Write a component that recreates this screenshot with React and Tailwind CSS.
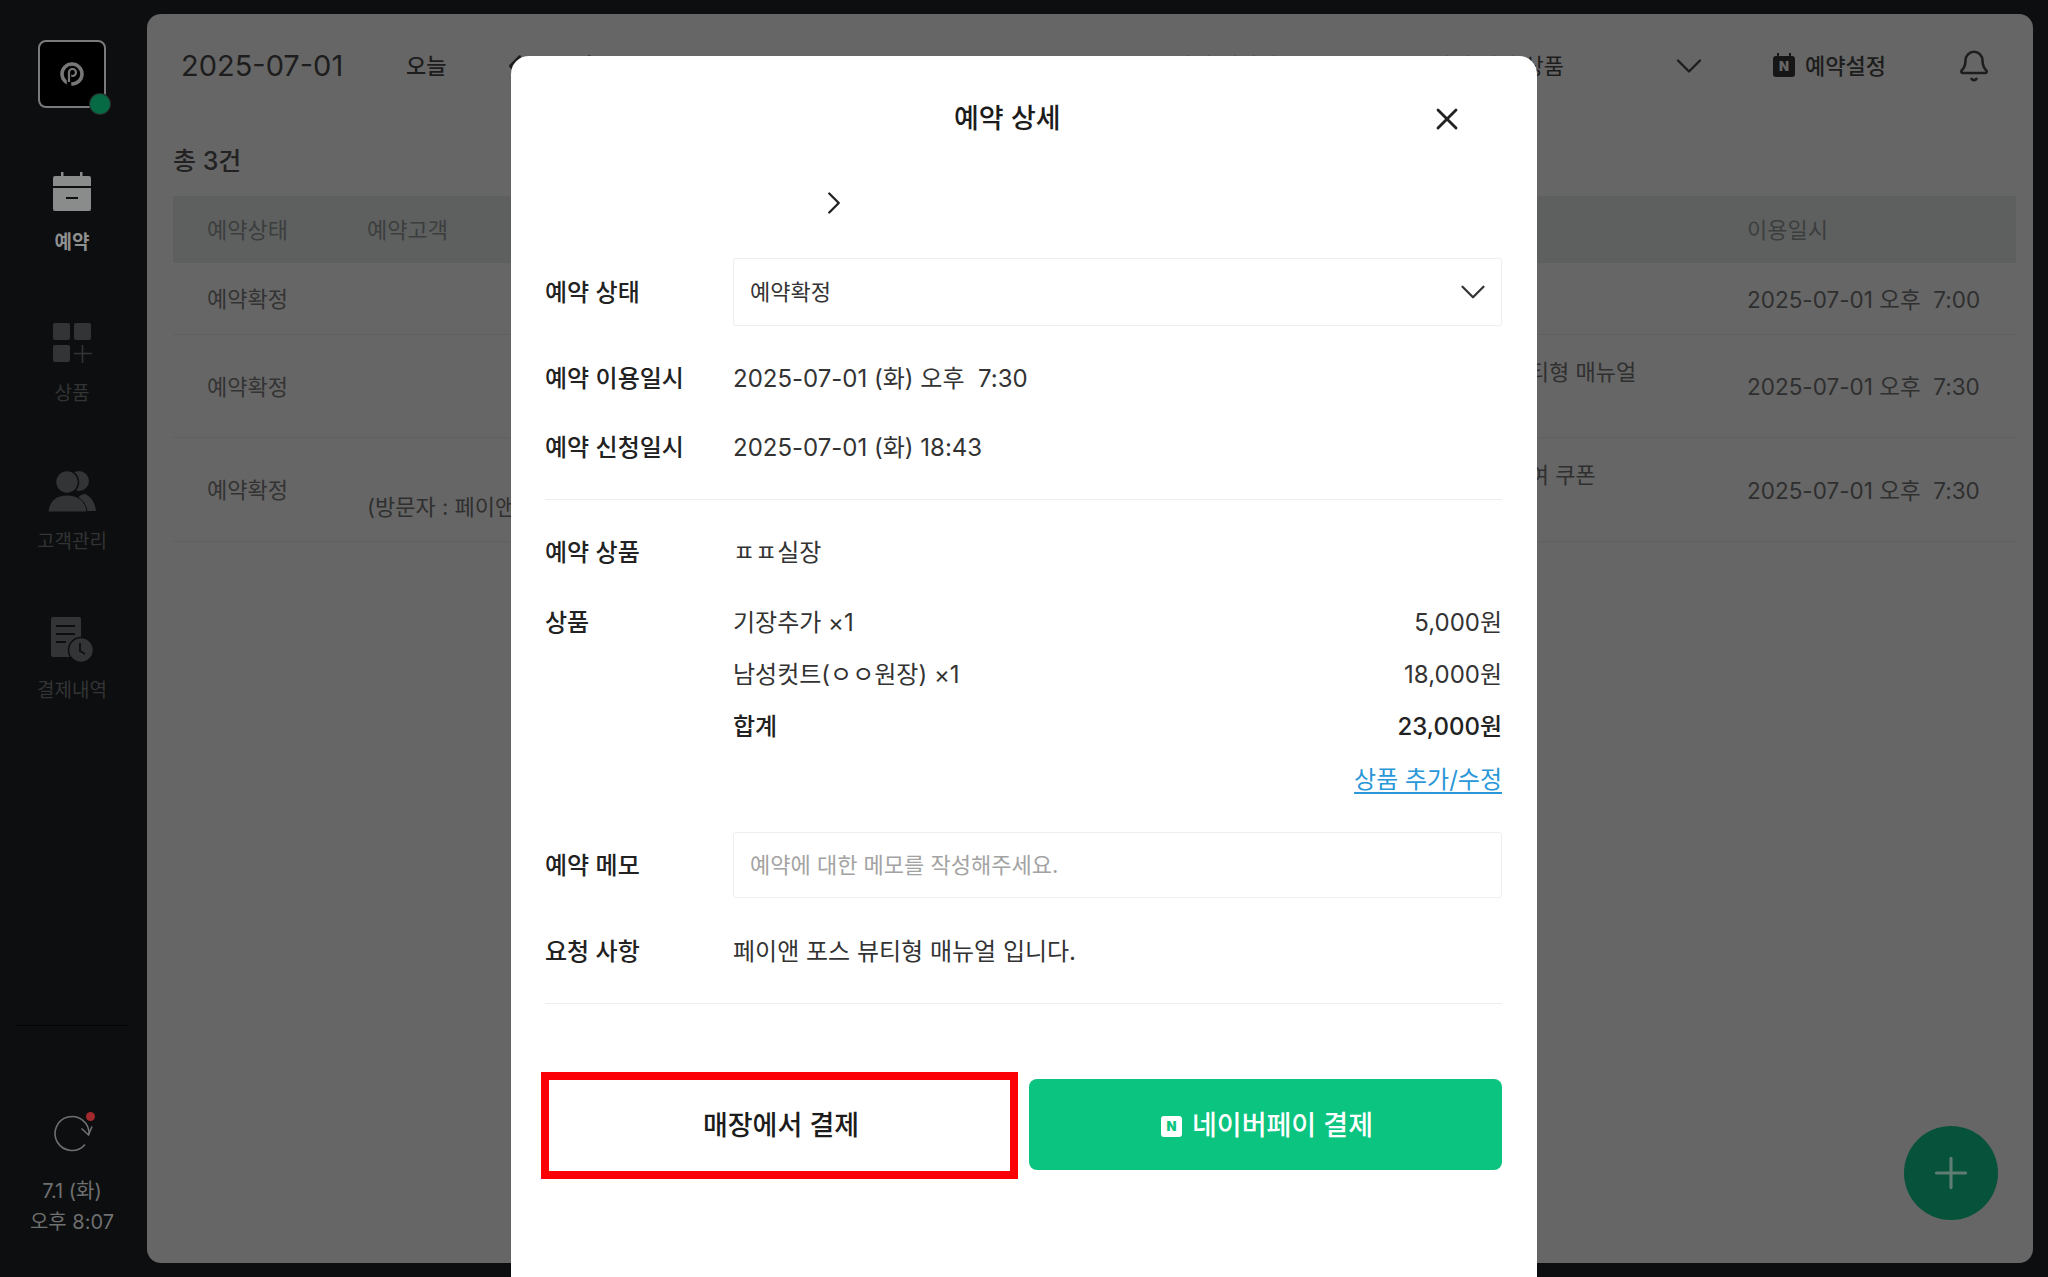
import { Bell, ChevronDown, ChevronLeft, ChevronRight, Plus, X } from 'lucide-react'

const font = { fontFamily: 'Inter, "Noto Sans CJK KR", sans-serif' }

function CalendarIcon() {
  return (
    <svg width="40" height="40" viewBox="0 0 40 40" fill="#8a8b8b">
      <rect x="9" y="0" width="2.5" height="6" />
      <rect x="28" y="0" width="2.5" height="6" />
      <path d="M1 6a2 2 0 0 1 2-2h34a2 2 0 0 1 2 2v8H1z" />
      <path d="M1 16h38v21a2 2 0 0 1-2 2H3a2 2 0 0 1-2-2z" />
      <rect x="14" y="25" width="12" height="2" fill="#0d0e0f" />
    </svg>
  )
}

function ProductIcon() {
  return (
    <svg width="40" height="40" viewBox="0 0 40 40" fill="#333435">
      <rect x="1" y="0" width="17" height="17" rx="2" />
      <rect x="22" y="0" width="17" height="17" rx="2" />
      <rect x="1" y="22" width="17" height="17" rx="2" />
      <path d="M22 30.5h18M30.500 22v18" stroke="#333435" strokeWidth="1.600" />
    </svg>
  )
}

function CustomerIcon() {
  return (
    <svg width="48" height="42" viewBox="0 0 48 42" fill="#333435">
      <circle cx="31" cy="11" r="10" />
      <path d="M26 41c2-10 4-16 10-17 6 1 11 8 12 17z" />
      <circle cx="19" cy="12" r="11.500" stroke="#0d0e0f" strokeWidth="1.500" />
      <path d="M0 42c1-11 8-17 19-17s19 6 20 17z" stroke="#0d0e0f" strokeWidth="1" />
    </svg>
  )
}

function PayHistoryIcon() {
  return (
    <svg width="42" height="46" viewBox="0 0 42 46">
      <path d="M0 2a2 2 0 0 1 2-2h26a2 2 0 0 1 2 2v38H2a2 2 0 0 1-2-2z" fill="#333435" />
      <path d="M5 9h19M5 17h19M5 25h10" stroke="#0d0e0f" strokeWidth="2" />
      <circle cx="30" cy="33" r="12.500" fill="#333435" stroke="#0d0e0f" strokeWidth="1.500" />
      <path d="M29 26v8l5 3" fill="none" stroke="#0d0e0f" strokeWidth="1.800" />
    </svg>
  )
}

function RefreshIcon() {
  return (
    <svg width="38" height="38" viewBox="0 0 38 38" fill="none" stroke="#6f7070" strokeWidth="1.600" className="overflow-visible">
      <path d="M32 29.500A17 17 0 1 1 36 19.500" />
      <path d="M28.500 13.500l7 6.500 3.500-8.500" />
    </svg>
  )
}

function LogoMark() {
  return (
    <svg width="24" height="24" viewBox="0 0 24 24" fill="none" stroke="#777777">
      <circle cx="12" cy="12" r="10" strokeWidth="3.500" />
      <circle cx="12.500" cy="10.500" r="3.500" strokeWidth="2.200" />
      <path d="M9 10v14" stroke="#000000" strokeWidth="4.500" />
      <path d="M9 10v10" strokeWidth="2.200" />
    </svg>
  )
}

function NaverBookingIcon() {
  return (
    <span className="relative flex h-[21px] w-[22px] items-center justify-center rounded-[3px] bg-[#161616] text-[13px] leading-none font-black text-[#666666]">
      <span className="absolute -top-[3px] left-[4px] h-[4px] w-[2px] bg-[#161616]" />
      <span className="absolute -top-[3px] right-[4px] h-[4px] w-[2px] bg-[#161616]" />
      N
    </span>
  )
}

function NavItem({ icon, label, className, textClass }) {
  return (
    <div className={`flex flex-col items-center ${className}`}>
      <div className="flex h-[46px] items-center justify-center">{icon}</div>
      <span className={`mt-[15px] text-[19px] leading-[26px] ${textClass}`}>{label}</span>
    </div>
  )
}

function Sidebar() {
  return (
    <aside className="flex h-full w-[147px] shrink-0 flex-col items-center pr-[3px]">
      <div className="relative mt-[40px] flex h-[68px] w-[68px] items-center justify-center rounded-[8px] border-2 border-[#7a7a7a] bg-black">
        <LogoMark />
        <span className="absolute -right-[6px] -bottom-[8px] h-[20px] w-[20px] rounded-full bg-[#066b45] ring-1 ring-[#2a2a2a]" />
      </div>
      <NavItem icon={<CalendarIcon />} label="예약" className="mt-[61px]" textClass="font-semibold text-[#8f9090]" />
      <NavItem icon={<ProductIcon />} label="상품" className="mt-[64px]" textClass="text-[#333435]" />
      <NavItem icon={<CustomerIcon />} label="고객관리" className="mt-[61px]" textClass="text-[#333435]" />
      <NavItem icon={<PayHistoryIcon />} label="결제내역" className="mt-[62px]" textClass="text-[#333435]" />
      <div className="mt-auto mb-[89px] h-px w-[112px] bg-[#050505]" />
      <div className="relative mb-[23px]">
        <RefreshIcon />
        <span className="absolute -top-[3px] right-[-4px] h-[9px] w-[9px] rounded-full bg-[#a1282d]" />
      </div>
      <div className="mb-[39px] flex flex-col items-center text-[20px] leading-[31px] text-[#6f7070]">
        <span>7.1 (화)</span>
        <span>오후 8:07</span>
      </div>
    </aside>
  )
}

function Row({ h, product, customer, time }) {
  return (
    <div className={`flex items-center border-b border-[#606060] pt-[2px] text-[22px] text-[#2f2f2f] ${h}`}>
      <div className="w-[194px] pl-[34px] text-[#333333]">예약확정</div>
      <div className="w-[1028px]">{customer && <div className="pt-[34px]">{customer}</div>}</div>
      <div className="w-[352px]">{product && <div className="pb-[30px]">{product}</div>}</div>
      <div className="flex-1 text-[22.5px] whitespace-pre">{time}</div>
    </div>
  )
}

function Background() {
  return (
    <main className="my-[14px] mr-[15px] flex-1 rounded-[14px] bg-[#666666] pr-[17px] pl-[26px]">
      <div className="flex h-[104px] items-center">
        <span className="ml-[8px] w-[225px] text-[29px] text-[#1d1d1d]">2025-07-01</span>
        <span className="w-[46px] text-[22px] font-medium text-[#1d1d1d]">오늘</span>
        <ChevronLeft className="ml-[44px] text-[#1d1d1d]" size={38} strokeWidth={1.600} />
        <ChevronRight className="ml-[41px] text-[#1d1d1d]" size={38} strokeWidth={1.600} />
        <span className="ml-[558px] text-[22px] text-[#1d1d1d]">전체 예약자</span>
        <div className="ml-auto flex items-center text-[#1d1d1d]">
          <span className="mr-[103px] text-[22px]">전체 예약 상품</span>
          <ChevronDown className="mr-[62px]" size={44} strokeWidth={1.300} />
          <NaverBookingIcon />
          <span className="mr-[71px] ml-[10px] text-[22px] font-medium">예약설정</span>
          <Bell className="mr-[25px]" size={34} strokeWidth={1.800} />
        </div>
      </div>
      <div className="mt-[27px] mb-[19px] h-[32px] text-[25px] leading-[32px] font-medium text-[#222222]">총 3건</div>
      <div className="flex h-[67px] items-center bg-[#5e6060] pt-[2px] text-[22px] text-[#3c3e3e]">
        <div className="w-[194px] pl-[34px]">예약상태</div>
        <div className="w-[1380px]">예약고객</div>
        <div className="flex-1">이용일시</div>
      </div>
      <Row h="h-[72px]" time="2025-07-01 오후  7:00" />
      <Row h="h-[103px]" product="페이앤 포스 뷰티형 매뉴얼" time="2025-07-01 오후  7:30" />
      <Row h="h-[104px]" customer="(방문자 : 페이앤 포스)" product="리뷰 이벤트 참여 쿠폰" time="2025-07-01 오후  7:30" />
    </main>
  )
}

function DetailRow({ label, children, className = '' }) {
  return (
    <div className={`flex h-[32px] items-center pt-[2px] text-[24px] leading-[30px] ${className}`}>
      <span className="w-[188px] shrink-0 font-medium text-[#222222]">{label}</span>
      {children}
    </div>
  )
}

function PriceRow({ label, name, price, strong, className }) {
  return (
    <DetailRow label={label} className={className}>
      <span className={`flex-1 ${strong ? 'font-medium text-[#222222]' : 'text-[#333333]'}`}>{name}</span>
      <span className={strong ? 'font-medium text-[#222222]' : 'text-[#333333]'}>{price}</span>
    </DetailRow>
  )
}

function BookingModal() {
  return (
    <section className="absolute top-[56px] left-[511px] h-[1221px] w-[1026px] rounded-t-[18px] bg-white pr-[35px] pl-[34px]">
      <header className="relative flex h-[124px] items-center pt-[2px]">
        <h1 className="ml-[409px] text-[27px] font-medium text-[#1c1c1c]">예약 상세</h1>
        <X className="absolute top-[45px] right-[37px] text-[#222222]" size={36} strokeWidth={1.900} />
      </header>
      <div className="mb-[32px] flex h-[46px] items-center pl-[270px]">
        <ChevronRight className="text-[#222222]" size={38} strokeWidth={1.500} />
      </div>

      <div className="flex h-[68px] items-center text-[24px]">
        <span className="w-[188px] shrink-0 pt-[2px] font-medium text-[#222222]">예약 상태</span>
        <div className="flex h-full flex-1 items-center justify-between rounded-[3px] border border-[#eeeeee] pr-[7px] pl-[16px] text-[22px] text-[#333333]">
          예약확정
          <ChevronDown size={42} strokeWidth={1.300} />
        </div>
      </div>
      <DetailRow label="예약 이용일시" className="mt-[36px]">
        <span className="whitespace-pre text-[#333333]">2025-07-01 (화) 오후  7:30</span>
      </DetailRow>
      <DetailRow label="예약 신청일시" className="mt-[37px]">
        <span className="text-[#333333]">2025-07-01 (화) 18:43</span>
      </DetailRow>
      <div className="mt-[36px] h-px bg-[#eeeeee]" />

      <DetailRow label="예약 상품" className="mt-[36px]">
        <span className="text-[#333333]">ㅍㅍ실장</span>
      </DetailRow>
      <PriceRow label="상품" name="기장추가 ×1" price="5,000원" className="mt-[38px]" />
      <PriceRow name="남성컷트(ㅇㅇ원장) ×1" price="18,000원" className="mt-[20px]" />
      <PriceRow name="합계" price="23,000원" strong className="mt-[20px]" />
      <div className="mt-[21px] flex h-[32px] justify-end pt-[1px] text-[24px] leading-[32px] text-[#2a97d8] underline underline-offset-4">
        상품 추가/수정
      </div>

      <div className="mt-[37px] flex h-[66px] items-center text-[24px]">
        <span className="w-[188px] shrink-0 pt-[2px] font-medium text-[#222222]">예약 메모</span>
        <div className="flex h-full flex-1 items-center rounded-[3px] border border-[#eeeeee] pl-[16px] text-[22px] text-[#a3a3a3]">
          예약에 대한 메모를 작성해주세요.
        </div>
      </div>
      <DetailRow label="요청 사항" className="mt-[37px]">
        <span className="text-[#333333]">페이앤 포스 뷰티형 매뉴얼 입니다.</span>
      </DetailRow>
      <div className="mt-[36px] h-px bg-[#eeeeee]" />

      <div className="mt-[75px] flex h-[91px] gap-[12px]">
        <button type="button" className="relative w-[472px] pt-[3px] text-[27px] font-medium text-[#1c1c1c]">
          매장에서 결제
          <span className="absolute -top-[7px] -right-[1px] -bottom-[9px] -left-[4px] border-[8px] border-[#fb0007]" />
        </button>
        <button
          type="button"
          className="flex flex-1 items-center justify-center gap-[10px] rounded-[8px] bg-[#0bc47f] pt-[3px] pl-[3px] text-[27px] font-medium text-white"
        >
          <span className="flex h-[21px] w-[21px] items-center justify-center rounded-[3px] bg-white text-[13px] leading-none font-black text-[#0bc47f]">
            N
          </span>
          네이버페이 결제
        </button>
      </div>
    </section>
  )
}

export default function App() {
  return (
    <div className="relative flex h-[1277px] w-[2048px] overflow-hidden bg-[#0d0e0f]" style={font}>
      <Sidebar />
      <Background />
      <button
        type="button"
        className="absolute top-[1126px] left-[1904px] flex h-[94px] w-[94px] items-center justify-center rounded-full bg-[#06523a] text-[#5f7d72]"
      >
        <Plus size={50} strokeWidth={1.500} />
      </button>
      <BookingModal />
    </div>
  )
}
